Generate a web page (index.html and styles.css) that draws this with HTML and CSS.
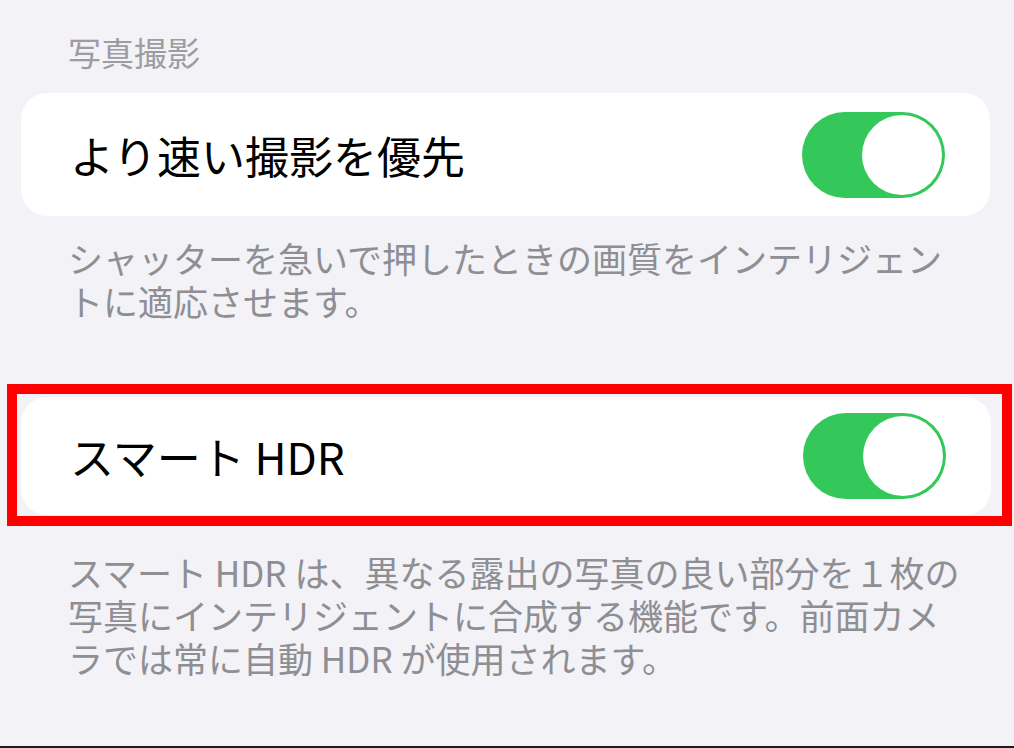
FILE: index.html
```html
<!DOCTYPE html>
<html>
    <head>
        <title>カメラ</title>
        <meta charset="utf-8">
        <link rel="stylesheet" href="styles.css">
    </head>
    <body>
        <div class="page">
            <div class="section-title">写真撮影</div>
            <div class="cell">
                <span class="label">より速い撮影を優先</span>
                <span class="switch on"><span class="knob"></span></span>
            </div>
            <p class="footer">シャッターを急いで押したときの画質をインテリジェントに適応させます。</p>

            <div class="highlight">
                <div class="cell cell-short">
                    <span class="label">スマート HDR</span>
                    <span class="switch on"><span class="knob"></span></span>
                </div>
            </div>
            <p class="footer footer-hdr">スマート HDR は、異なる露出の写真の良い部分を１枚の写真にインテリジェントに合成する機能です。前面カメラでは常に自動 HDR が使用されます。</p>
        </div>
    </body>
</html>
```

FILE: styles.css
```css
* {
    margin: 0;
    padding: 0;
    box-sizing: border-box;
}
body {
    background-color: #f2f2f7;
    font-family: "Noto Sans CJK JP", "Noto Sans", sans-serif;
}
.page {
    height: 748px;
    overflow: hidden;
    border-bottom: 2px solid #1c1c1e;
}
.section-title {
    padding: 32px 0 0 68px;
    font-size: 33px;
    line-height: 40px;
    color: #9c9ca1;
}
.cell {
    display: flex;
    align-items: center;
    justify-content: space-between;
    height: 123px;
    margin: 21px 24px 0 21px;
    padding: 0 45px 0 49px;
    background-color: #fff;
    border-radius: 26px;
}
.cell-short {
    height: 118px;
    margin: 0;
}
.label {
    font-size: 44px;
    color: #000;
}
.switch {
    display: flex;
    align-items: center;
    justify-content: flex-start;
    width: 143px;
    height: 86px;
    padding: 3px;
    border-radius: 43px;
    background-color: #e9e9eb;
}
.switch.on {
    justify-content: flex-end;
    background-color: #34c759;
}
.knob {
    width: 80px;
    height: 80px;
    border-radius: 50%;
    background-color: #fff;
}
.footer {
    padding: 20px 42px 0 68px;
    font-size: 35px;
    line-height: 43px;
    color: #8e8e93;
}
.highlight {
    width: 1005px;
    margin: 62px 0 0 7px;
    padding: 3px 11px 1px 4px;
    border: 10px solid #ff0000;
}
.footer-hdr {
    padding-top: 24px;
}
```
